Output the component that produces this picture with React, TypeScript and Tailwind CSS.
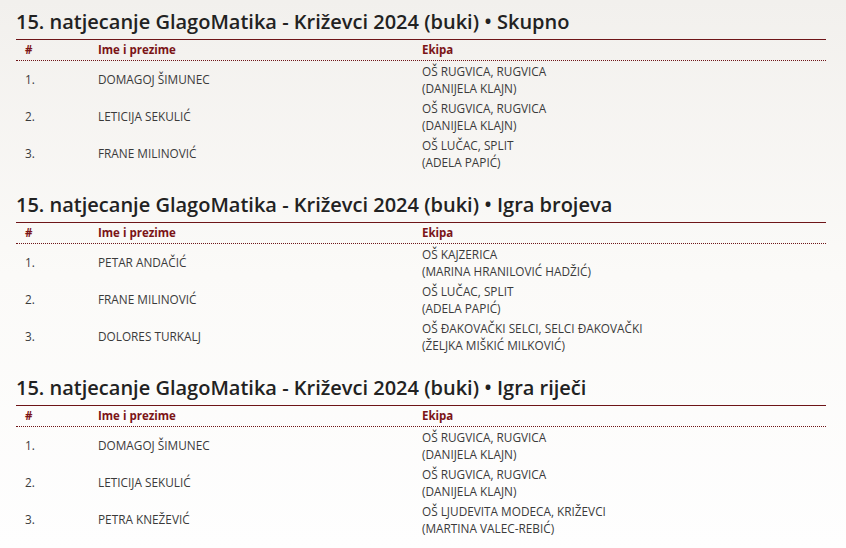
type Row = { place: string; name: string; school: string; mentor: string };

const sections: { title: string; rows: Row[] }[] = [
  {
    title: "15. natjecanje GlagoMatika - Križevci 2024 (buki) • Skupno",
    rows: [
      { place: "1.", name: "DOMAGOJ ŠIMUNEC", school: "OŠ RUGVICA, RUGVICA", mentor: "(DANIJELA KLAJN)" },
      { place: "2.", name: "LETICIJA SEKULIĆ", school: "OŠ RUGVICA, RUGVICA", mentor: "(DANIJELA KLAJN)" },
      { place: "3.", name: "FRANE MILINOVIĆ", school: "OŠ LUČAC, SPLIT", mentor: "(ADELA PAPIĆ)" },
    ],
  },
  {
    title: "15. natjecanje GlagoMatika - Križevci 2024 (buki) • Igra brojeva",
    rows: [
      { place: "1.", name: "PETAR ANDAČIĆ", school: "OŠ KAJZERICA", mentor: "(MARINA HRANILOVIĆ HADŽIĆ)" },
      { place: "2.", name: "FRANE MILINOVIĆ", school: "OŠ LUČAC, SPLIT", mentor: "(ADELA PAPIĆ)" },
      { place: "3.", name: "DOLORES TURKALJ", school: "OŠ ĐAKOVAČKI SELCI, SELCI ĐAKOVAČKI", mentor: "(ŽELJKA MIŠKIĆ MILKOVIĆ)" },
    ],
  },
  {
    title: "15. natjecanje GlagoMatika - Križevci 2024 (buki) • Igra riječi",
    rows: [
      { place: "1.", name: "DOMAGOJ ŠIMUNEC", school: "OŠ RUGVICA, RUGVICA", mentor: "(DANIJELA KLAJN)" },
      { place: "2.", name: "LETICIJA SEKULIĆ", school: "OŠ RUGVICA, RUGVICA", mentor: "(DANIJELA KLAJN)" },
      { place: "3.", name: "PETRA KNEŽEVIĆ", school: "OŠ LJUDEVITA MODECA, KRIŽEVCI", mentor: "(MARTINA VALEC-REBIĆ)" },
    ],
  },
];

const cols = "grid grid-cols-[73px_324px_1fr]";

const ResultTable = ({ title, rows }: { title: string; rows: Row[] }) => (
  <section className="mb-[19px]">
    <h2 className="text-[20px] leading-[28px] font-semibold text-[#222222] mb-[3px]">{title}</h2>
    <div className="border-t border-[#6e1518]">
      <div className={`${cols} h-[21px] items-center border-b border-dotted border-[#6e1518] text-[11.5px] font-bold text-[#7b1416]`}>
        <div className="pl-[9px]">#</div>
        <div className="pl-[9px]">Ime i prezime</div>
        <div className="pl-[9px]">Ekipa</div>
      </div>
      {rows.map((r) => (
        <div key={r.place} className={`${cols} h-[37px] items-center text-[11.8px] text-[#3a3a3a]`}>
          <div className="pl-[9px]">{r.place}</div>
          <div className="pl-[9px]">{r.name}</div>
          <div className="pl-[9px] leading-[17px]">
            <div>{r.school}</div>
            <div>{r.mentor}</div>
          </div>
        </div>
      ))}
    </div>
  </section>
);

export default function App() {
  return (
    <div
      className="h-[548px] overflow-hidden w-full bg-gradient-to-b from-[#f2f0ed] via-[#fbfaf8] to-[#fefefe] pl-4 pr-5 pt-[8px]"
      style={{ fontFamily: '"Open Sans", "Liberation Sans", sans-serif' }}
    >
      {sections.map((s) => (
        <ResultTable key={s.title} title={s.title} rows={s.rows} />
      ))}
    </div>
  );
}
